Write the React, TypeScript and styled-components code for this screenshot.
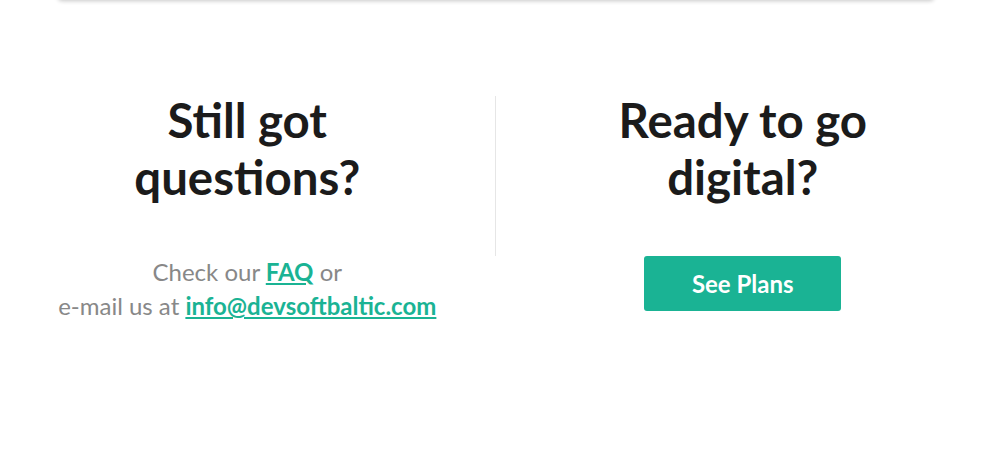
import React from "react";
import styled, { createGlobalStyle } from "styled-components";

const Global = createGlobalStyle`
  html, body { margin: 0; padding: 0; background: #ffffff; }
  body { font-family: Lato, "Open Sans", Arial, sans-serif; overflow: hidden; }
  * { box-sizing: border-box; }
`;

const Page = styled.div`
  width: 990px;
  height: 456px;
  background: #ffffff;
  overflow: hidden;
`;

const TopCard = styled.div`
  width: 876px;
  height: 40px;
  margin: -40px 0 0 58px;
  background: #ffffff;
  border-radius: 4px;
  box-shadow: 0 1px 4px rgba(0, 0, 0, 0.22);
`;

const Section = styled.section`
  display: flex;
  padding-top: 91px;
`;

const Column = styled.div`
  flex: 1 1 0;
  display: flex;
  flex-direction: column;
  align-items: center;
  text-align: center;
`;

const Divider = styled.div`
  flex: 0 0 1px;
  width: 1px;
  height: 160px;
  margin-top: 5px;
  background: #e6e6e6;
`;

const Heading = styled.h2`
  margin: 0 0 51px;
  font-family: Lato, "Open Sans", Arial, sans-serif;
  font-weight: 700;
  font-size: 47.4px;
  line-height: 57px;
  color: #1b1b1b;
`;

const Text = styled.p`
  margin: -1px 0 0;
  font-size: 24px;
  line-height: 34px;
  color: #888888;
`;

const Link = styled.a`
  color: #1ab394;
  font-weight: 700;
  text-decoration: underline;
  text-underline-offset: 2px;
`;

const Button = styled.a`
  display: flex;
  align-items: center;
  justify-content: center;
  width: 197px;
  height: 55px;
  border-radius: 3px;
  background: #1ab394;
  color: #ffffff;
  font-weight: 700;
  font-size: 24px;
  text-decoration: none;
`;

export default function App() {
  return (
    <Page>
      <Global />
      <TopCard />
      <Section>
        <Column>
          <Heading>
            Still got
            <br />
            questions?
          </Heading>
          <Text>
            Check our <Link href="#">FAQ</Link> or
            <br />
            e-mail us at <Link href="#">info@devsoftbaltic.com</Link>
          </Text>
        </Column>
        <Divider />
        <Column>
          <Heading>
            Ready to go
            <br />
            digital?
          </Heading>
          <Button href="#">See Plans</Button>
        </Column>
      </Section>
    </Page>
  );
}
